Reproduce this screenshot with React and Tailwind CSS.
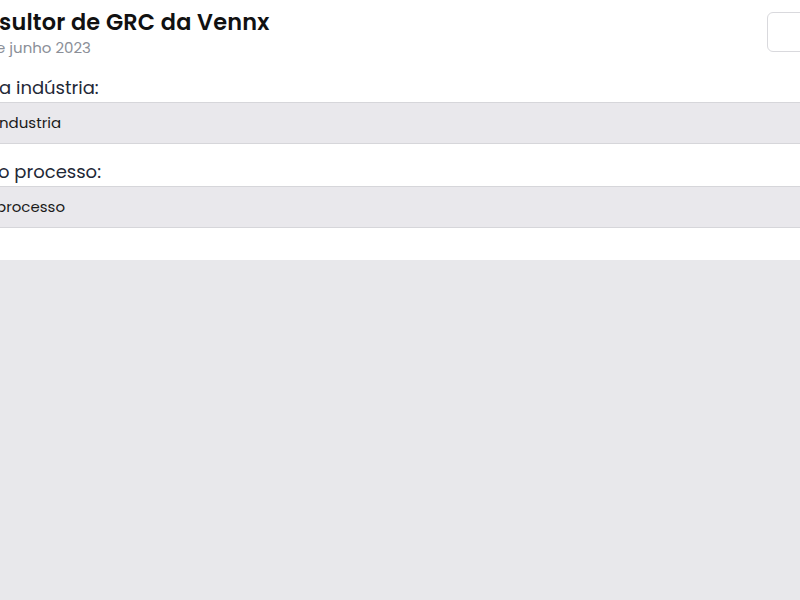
export default function App() {
  const font = { fontFamily: "Poppins, Inter, 'Noto Sans', sans-serif" };
  return (
    <div className="w-[800px] h-[600px] overflow-hidden bg-white flex flex-col" style={font}>
      <div className="flex flex-col shrink-0">
        <div className="flex items-start justify-between h-[64px]">
          <div className="flex flex-col pt-[7px]">
            <h1 className="text-[22.4px] leading-[30px] font-semibold text-[#111] tracking-[0.2px] -ml-[1px]">sultor de GRC da Vennx</h1>
            <p className="text-[15px] leading-[20px] text-[#8b8f98] -ml-[4px] mt-[1px]">e junho 2023</p>
          </div>
          <div className="mt-[12px] w-[48px] h-[40px] -mr-[15px] border border-[#d9d9dd] rounded-[6px] bg-white" />
        </div>
        <label className="text-[18px] leading-[26px] text-[#1f2937] h-[38px] -ml-[1px] flex items-end pb-[1px]">a indústria:</label>
        <div className="h-[42px] bg-[#e9e8ec] border-y border-[#d6d6da] flex items-center text-[15px] text-[#1a1a1a] -ml-[1px]">ndustria</div>
        <label className="text-[18px] leading-[26px] text-[#1f2937] h-[42px] flex items-end pb-[1px] -ml-[2px]">o processo:</label>
        <div className="h-[42px] bg-[#e9e8ec] border-y border-[#d6d6da] flex items-center text-[15px] text-[#1a1a1a] -ml-[4px]">processo</div>
        <div className="h-[32px] bg-white" />
      </div>
      <div className="flex-1 bg-[#e8e8eb]" />
    </div>
  );
}
